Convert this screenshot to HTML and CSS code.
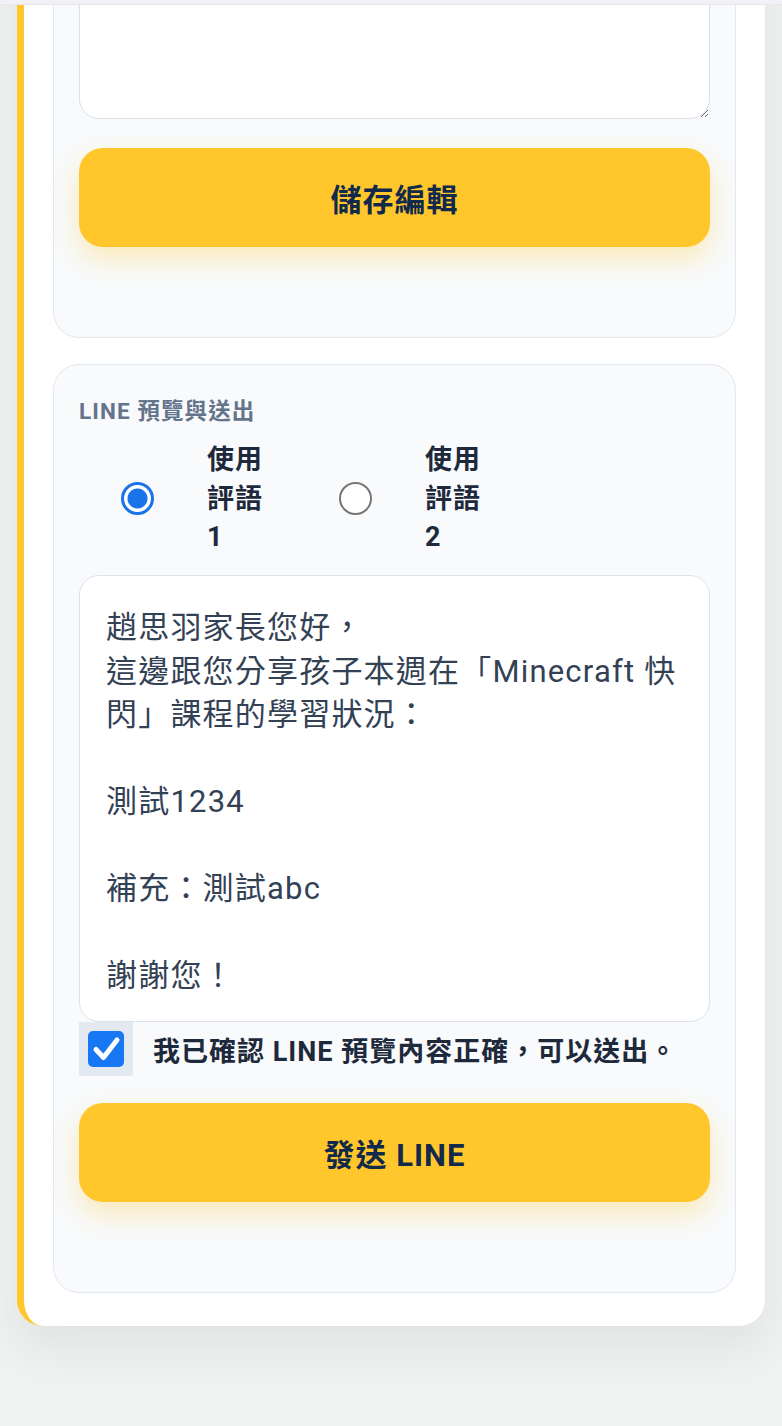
FILE: index.html
```html
<!DOCTYPE html>
<html lang="zh-Hant">
<head>
<meta charset="utf-8">
<meta name="viewport" content="width=device-width, initial-scale=1">
<title>LINE 預覽與送出</title>
<link rel="stylesheet" href="styles.css">
</head>
<body>
<div class="topbar"></div>
<main class="card">
  <section class="panel">
    <textarea class="editor" aria-label="評語編輯"></textarea>
    <button class="btn" type="button">儲存編輯</button>
  </section>

  <section class="panel">
    <h2 class="panel-title">LINE 預覽與送出</h2>
    <div class="radio-group">
      <label class="option">
        <span class="radio radio-on"></span>
        <span class="option-text">使用評語 1</span>
      </label>
      <label class="option">
        <span class="radio"></span>
        <span class="option-text">使用評語 2</span>
      </label>
    </div>
    <div class="preview">趙思羽家長您好，
這邊跟您分享孩子本週在「Minecraft 快閃」課程的學習狀況：

測試1234

補充：測試abc

謝謝您！</div>
    <label class="confirm">
      <span class="check-wrap">
        <span class="check">
          <svg viewBox="0 0 36 36" width="36" height="36" aria-hidden="true">
            <path d="M8 18.5 L15.5 26.5 L29 9" fill="none" stroke="#ffffff" stroke-width="5" stroke-linecap="round" stroke-linejoin="round"/>
          </svg>
        </span>
      </span>
      <span class="confirm-text">我已確認 LINE 預覽內容正確，可以送出。</span>
    </label>
    <button class="btn btn-send" type="button">發送 LINE</button>
  </section>
</main>
</body>
</html>
```

FILE: styles.css
```css
html, body {
  margin: 0;
  padding: 0;
}

body {
  background: #f0f2f1;
  font-family: Roboto, "Noto Sans CJK TC", "Noto Sans", sans-serif;
  color: #1e293b;
  min-height: 1426px;
}

.topbar {
  position: sticky;
  top: 0;
  z-index: 5;
  height: 5px;
  background: #f1f1f7;
  border-bottom: 1px solid #e7e7ef;
  box-sizing: border-box;
}

.card {
  margin: -161px 17px 0;
  background: #ffffff;
  border-left: 7px solid #ffc72c;
  border-radius: 26px;
  padding: 29px 29px 33px 29px;
  display: flex;
  flex-direction: column;
  gap: 26px;
  box-shadow: 0 22px 44px rgba(30, 41, 59, 0.07);
}

.panel {
  background: #f8fafc;
  border: 1px solid #e2e8f0;
  border-radius: 26px;
  padding: 25px 25px 90px;
  display: flex;
  flex-direction: column;
}

.editor {
  display: block;
  box-sizing: border-box;
  width: 100%;
  height: 220px;
  margin: 0 0 29px;
  background: #ffffff;
  border: 1px solid #dbe1e8;
  border-radius: 20px;
  resize: vertical;
  font: inherit;
}

.btn {
  display: block;
  width: 100%;
  height: 99px;
  border: none;
  border-radius: 24px;
  background: #ffc72c;
  color: #11294a;
  font-family: Roboto, "Noto Sans CJK TC", sans-serif;
  font-size: 31px;
  font-weight: 700;
  letter-spacing: 1px;
  box-shadow: 0 12px 28px rgba(255, 199, 44, 0.32);
  cursor: pointer;
}

.btn-send {
  margin-top: 27px;
}

.panel-title {
  margin: 7px 0 0;
  font-size: 22.5px;
  line-height: 28px;
  font-weight: 700;
  letter-spacing: 1.1px;
  color: #64748b;
}

.radio-group {
  display: flex;
  margin-top: 16px;
}

.option {
  width: 218px;
  box-sizing: border-box;
  padding-left: 42px;
  display: flex;
  align-items: center;
  gap: 53px;
}

.radio {
  flex: none;
  width: 33px;
  height: 33px;
  box-sizing: border-box;
  border-radius: 50%;
  border: 2px solid #767676;
  background: #ffffff;
}

.radio-on {
  border: 3px solid #1a73e8;
  background: radial-gradient(circle, #1a73e8 0 9.5px, #ffffff 10.5px);
}

.option-text {
  width: 64px;
  font-size: 27px;
  line-height: 38.5px;
  font-weight: 700;
  letter-spacing: 1px;
  color: #1e293b;
}

.preview {
  margin-top: 18.5px;
  box-sizing: border-box;
  height: 447px;
  background: #ffffff;
  border: 1px solid #dde3ea;
  border-radius: 20px;
  padding: 30px 26px 22px;
  white-space: pre-wrap;
  font-size: 31px;
  line-height: 43.5px;
  letter-spacing: 1.2px;
  color: #334155;
}

.confirm {
  display: flex;
  align-items: center;
  gap: 20px;
  height: 54px;
}

.check-wrap {
  flex: none;
  width: 54px;
  height: 54px;
  background: #e3e9f0;
  display: flex;
  align-items: center;
  justify-content: center;
}

.check {
  width: 36px;
  height: 36px;
  border-radius: 5px;
  background: #1877f2;
  display: block;
}

.check svg {
  display: block;
}

.confirm-text {
  font-size: 27px;
  font-weight: 700;
  letter-spacing: 1px;
  color: #1e293b;
  white-space: nowrap;
}
```
